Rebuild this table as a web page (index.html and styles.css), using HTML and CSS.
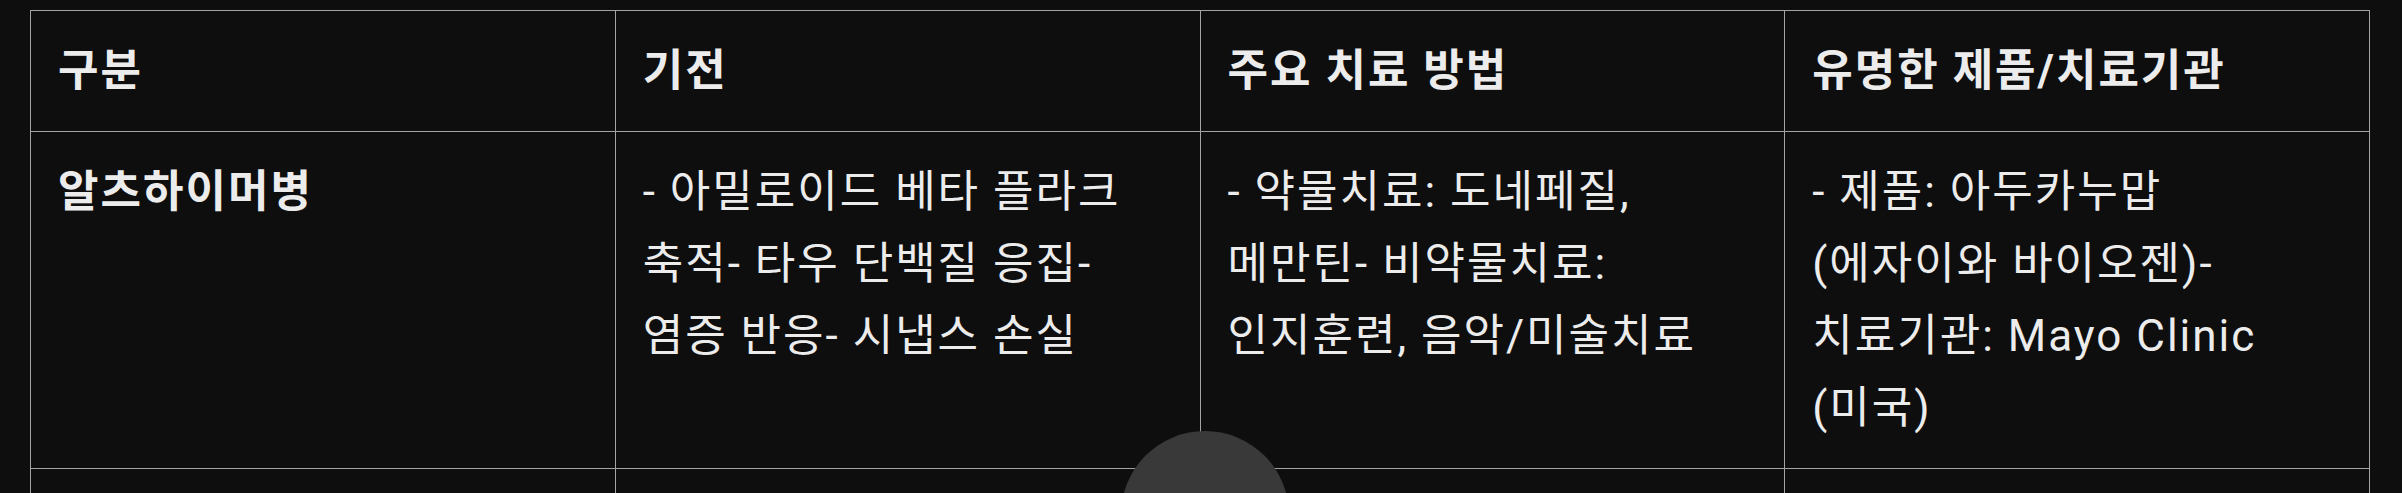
FILE: index.html
```html
<!DOCTYPE html>
<html lang="ko">
<head>
<meta charset="utf-8">
<title>치매 비교표</title>
<link rel="stylesheet" href="styles.css">
</head>
<body>
<div class="page">
  <table class="compare">
    <thead>
      <tr>
        <th>구분</th>
        <th>기전</th>
        <th>주요 치료 방법</th>
        <th>유명한 제품/치료기관</th>
      </tr>
    </thead>
    <tbody>
      <tr>
        <td><strong>알츠하이머병</strong></td>
        <td>- 아밀로이드 베타 플라크 축적- 타우 단백질 응집- 염증 반응- 시냅스 손실</td>
        <td>- 약물치료: 도네페질, 메만틴- 비약물치료: 인지훈련, 음악/미술치료</td>
        <td>- 제품: 아두카누맙 (에자이와 바이오젠)- 치료기관: Mayo Clinic (미국)</td>
      </tr>
      <tr class="next">
        <td>&nbsp;</td>
        <td>&nbsp;</td>
        <td>&nbsp;</td>
        <td>&nbsp;</td>
      </tr>
    </tbody>
  </table>
</div>
<button class="scroll-btn" aria-label="scroll"></button>
</body>
</html>
```
FILE: styles.css
```css
html, body {
  margin: 0;
  padding: 0;
  background: #0e0e0e;
  overflow: hidden;
  height: 493px;
}

.page {
  padding: 10px 0 0 30px;
}

.compare {
  border-collapse: collapse;
  table-layout: fixed;
  width: 2340px;
  font-family: Roboto, "Noto Sans CJK KR", sans-serif;
  font-size: 44px;
  letter-spacing: 2px;
  line-height: 72px;
  color: #ececec;
}

.compare th,
.compare td {
  border: 1px solid #a3a3a3;
  padding: 24px 27px;
  text-align: left;
  vertical-align: top;
  word-break: keep-all;
}

.compare th {
  font-weight: 700;
}

.compare td strong {
  font-weight: 700;
}

.compare .next td {
  height: 200px;
}

.scroll-btn {
  position: absolute;
  left: 1121px;
  top: 431px;
  width: 168px;
  height: 168px;
  border: none;
  border-radius: 50%;
  background: #393939;
  padding: 0;
}
```
